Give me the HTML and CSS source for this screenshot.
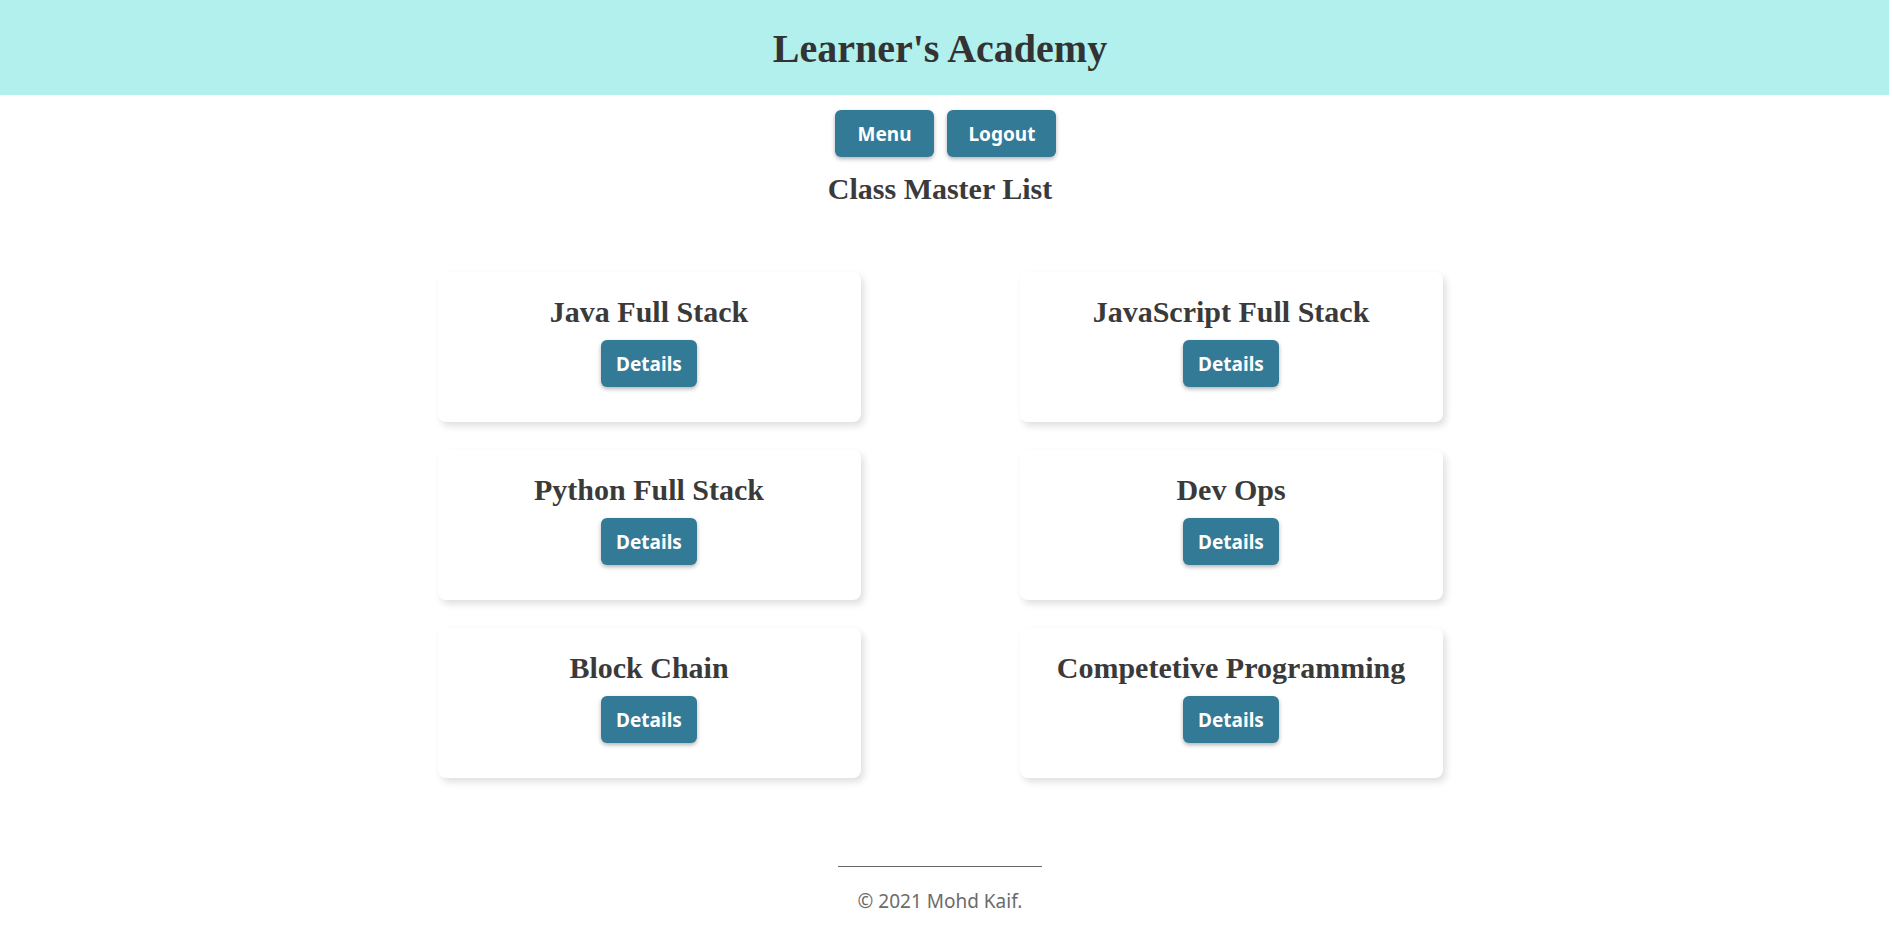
FILE: index.html
```html
<!DOCTYPE html>
<html lang="en">
<head>
<meta charset="utf-8">
<title>Learner's Academy</title>
<link rel="stylesheet" href="styles.css">
</head>
<body>
<header class="site-header">
  <h1 class="site-title">Learner's Academy</h1>
</header>
<nav class="top-nav">
  <button class="btn btn-nav btn-menu">Menu</button>
  <button class="btn btn-nav btn-logout">Logout</button>
</nav>
<h2 class="page-title">Class Master List</h2>
<main class="class-grid">
  <div class="class-card">
    <h3 class="class-name">Java Full Stack</h3>
    <button class="btn btn-details">Details</button>
  </div>
  <div class="class-card">
    <h3 class="class-name">JavaScript Full Stack</h3>
    <button class="btn btn-details">Details</button>
  </div>
  <div class="class-card">
    <h3 class="class-name">Python Full Stack</h3>
    <button class="btn btn-details">Details</button>
  </div>
  <div class="class-card">
    <h3 class="class-name">Dev Ops</h3>
    <button class="btn btn-details">Details</button>
  </div>
  <div class="class-card">
    <h3 class="class-name">Block Chain</h3>
    <button class="btn btn-details">Details</button>
  </div>
  <div class="class-card">
    <h3 class="class-name">Competetive Programming</h3>
    <button class="btn btn-details">Details</button>
  </div>
</main>
<footer class="site-footer">
  <hr class="footer-rule">
  <p class="footer-text">&copy; 2021 Mohd Kaif.</p>
</footer>
</body>
</html>
```
FILE: styles.css
```css
html {
  overflow-y: scroll;
}
::-webkit-scrollbar {
  width: 3px;
  background: #f0f0f0;
}
::-webkit-scrollbar-thumb {
  background: #b9b9b9;
}
body {
  margin: 0;
  padding-right: 12px;
  font-family: "Liberation Serif", "Times New Roman", serif;
  color: #3a3a3a;
  background: #ffffff;
}
.site-header {
  height: 95px;
  margin-right: -9px;
  padding-right: 9px;
  background: #b1f0ed;
  display: flex;
  align-items: center;
  justify-content: center;
}
.site-title {
  margin: 0;
  font-size: 40px;
  font-weight: bold;
  color: #333333;
  line-height: 44px;
  padding-top: 2px;
}
.top-nav {
  display: flex;
  justify-content: center;
  gap: 13px;
  margin-top: 15px;
  padding-left: 11px;
}
.btn {
  font-family: "Noto Sans", "Open Sans", sans-serif;
  font-weight: bold;
  font-size: 19px;
  color: #ffffff;
  background: #337a97;
  border: none;
  border-radius: 6px;
  height: 47px;
  line-height: 45px;
  padding-top: 2px;
  box-shadow: 0 2px 4px rgba(0, 0, 0, 0.3);
  cursor: pointer;
}
.btn-menu {
  padding-left: 23px;
  padding-right: 23px;
}
.btn-logout {
  padding-left: 21px;
  padding-right: 21px;
}
.btn-details {
  padding-left: 15px;
  padding-right: 15px;
}
.page-title {
  margin: 15px 0 0;
  text-align: center;
  font-size: 30px;
  line-height: 34px;
  font-weight: bold;
}
.class-grid {
  display: grid;
  grid-template-columns: 423px 423px;
  column-gap: 159px;
  row-gap: 28px;
  justify-content: center;
  margin-top: 66px;
}
.class-card {
  height: 150px;
  box-sizing: border-box;
  padding-top: 23px;
  border-radius: 8px;
  background: #ffffff;
  box-shadow: 3px 4px 7px rgba(0, 0, 0, 0.13);
  display: flex;
  flex-direction: column;
  align-items: center;
  gap: 11px;
}
.class-name {
  margin: 0;
  font-size: 30px;
  line-height: 34px;
  font-weight: bold;
}
.site-footer {
  margin-top: 88px;
  display: flex;
  flex-direction: column;
  align-items: center;
  padding-bottom: 40px;
}
.footer-rule {
  width: 204px;
  margin: 0;
  border: none;
  border-top: 1px solid #666666;
}
.footer-text {
  margin: 22px 0 0;
  font-family: "Noto Sans", "Open Sans", sans-serif;
  font-size: 19px;
  line-height: 24px;
  color: #6b6b6b;
}
```
